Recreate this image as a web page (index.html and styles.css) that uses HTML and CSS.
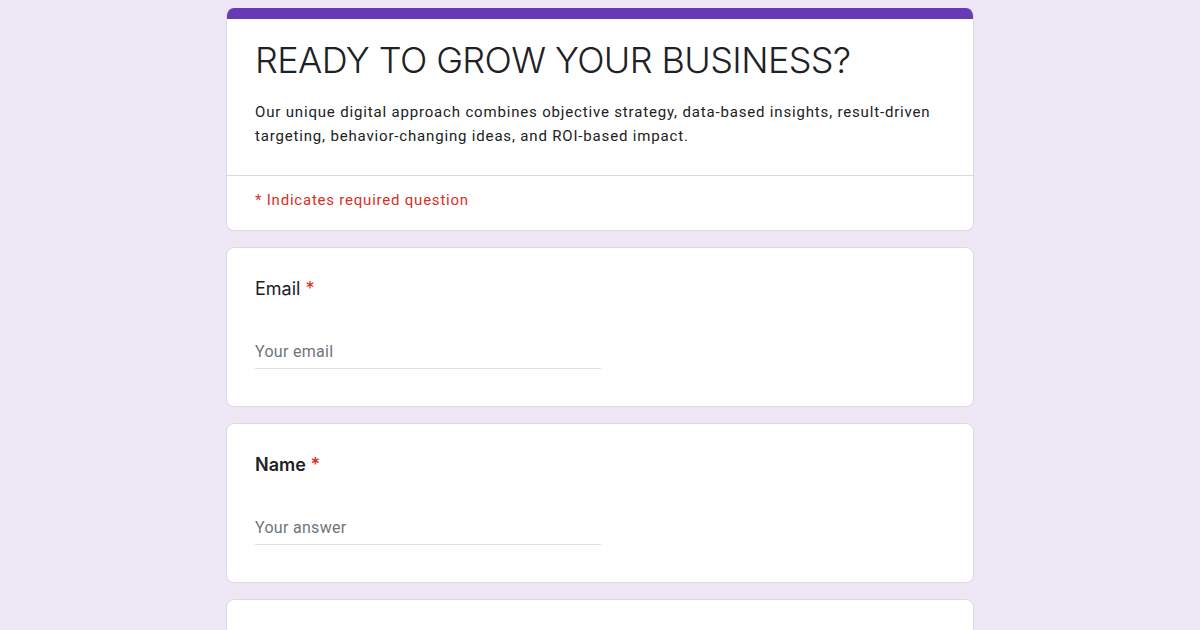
FILE: index.html
```html
<!DOCTYPE html>
<html>
<head>
<meta charset="utf-8">
<link rel="stylesheet" href="styles.css">
</head>
<body>
<div class="form">
  <div class="card header-card">
    <div class="accent"></div>
    <div class="header-main">
      <h1 class="title">READY TO GROW YOUR BUSINESS?</h1>
      <p class="desc">Our unique digital approach combines objective strategy, data-based insights, result-driven targeting, behavior-changing ideas, and ROI-based impact.</p>
    </div>
    <div class="required-note">* Indicates required question</div>
  </div>

  <div class="card question">
    <div class="label">Email <span class="star">*</span></div>
    <div class="input"><span class="placeholder">Your email</span></div>
  </div>

  <div class="card question">
    <div class="label bold">Name <span class="star">*</span></div>
    <div class="input"><span class="placeholder">Your answer</span></div>
  </div>

  <div class="card question"></div>
</div>
</body>
</html>
```

FILE: styles.css
```css
html, body {
  margin: 0;
  padding: 0;
  background: #ede7f6;
  height: 630px;
  overflow: hidden;
}
body {
  font-family: Roboto, "Liberation Sans", sans-serif;
  color: #202124;
}
.form {
  width: 748px;
  margin: 8px auto 0;
  display: flex;
  flex-direction: column;
  gap: 16px;
}
.card {
  background: #fff;
  border: 1px solid #dadce0;
  border-radius: 8px;
  box-sizing: border-box;
}
.header-card {
  border-top: none;
  overflow: hidden;
}
.accent {
  height: 11px;
  background: #673ab7;
}
.header-main {
  padding: 19px 28px 27px;
  border-bottom: 1px solid #dadce0;
}
.title {
  margin: 0;
  font-family: Inter, "Open Sans", sans-serif;
  font-weight: 300;
  font-size: 36px;
  line-height: 44px;
  letter-spacing: -0.6px;
  color: #202124;
}
.desc {
  margin: 18px 0 0;
  font-size: 15px;
  line-height: 24px;
  letter-spacing: 0.83px;
  color: #202124;
}
.required-note {
  padding: 14px 28px 20px;
  font-size: 15px;
  line-height: 20px;
  letter-spacing: 0.78px;
  color: #d93025;
}
.question {
  height: 160px;
  padding: 29px 28px 0;
}
.label {
  font-family: Inter, "Open Sans", sans-serif;
  font-size: 18px;
  line-height: 24px;
  color: #202124;
}
.label.bold {
  font-weight: 600;
}
.star {
  color: #d93025;
}
.input {
  margin-top: 40px;
  width: 346px;
  border-bottom: 1px solid #e0e0e0;
  padding-bottom: 5px;
  font-size: 16px;
  line-height: 22px;
}
.placeholder {
  color: #70757a;
  letter-spacing: 0.3px;
}
```
